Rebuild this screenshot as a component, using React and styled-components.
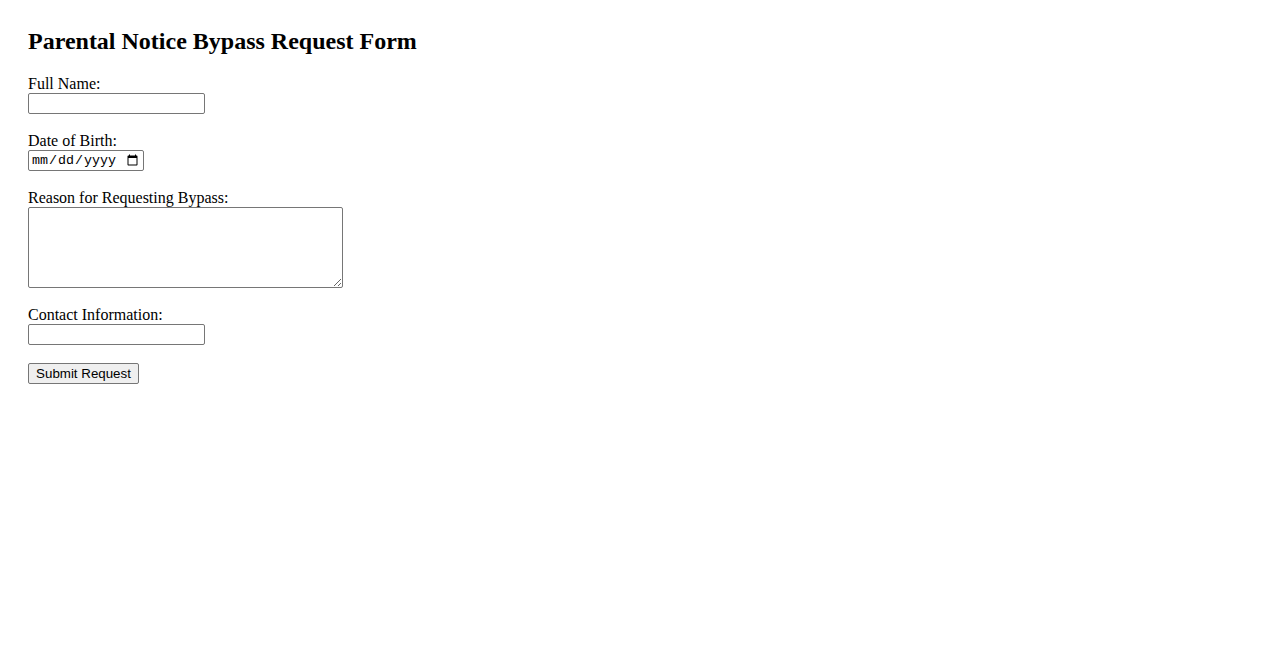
import React from "react";
import styled, { createGlobalStyle } from "styled-components";

const Global = createGlobalStyle`
  html, body { margin: 0; padding: 0; background: #fff; }
  body { font-family: "Liberation Serif", "Times New Roman", serif; font-size: 16px; color: #000; }
`;

const Page = styled.main`
  padding: 28px;
`;

const Title = styled.h2`
  margin: 0 0 19.5px;
  font-size: 24px;
  font-weight: bold;
  line-height: 27.5px;
`;

const Form = styled.form`
  display: flex;
  flex-direction: column;
  align-items: flex-start;
`;

const Field = styled.div`
  display: flex;
  flex-direction: column;
  align-items: flex-start;
  margin-bottom: 18px;
`;

const Label = styled.label`
  line-height: 18px;
`;

const controlBase = `
  box-sizing: border-box;
  border: 1px solid #767676;
  border-radius: 2px;
  background: #fff;
  margin: 0;
  color: #000;
`;

const TextInput = styled.input`
  ${controlBase}
  width: 177px;
  height: 21px;
  padding: 1px 2px;
  font: 13.33px "Liberation Sans", Arial, sans-serif;
`;

const DateInput = styled.input`
  ${controlBase}
  width: 116px;
  height: 21px;
  padding: 1px 2px;
  font: 13.33px "Liberation Mono", "DejaVu Sans Mono", monospace;
`;

const TextArea = styled.textarea`
  ${controlBase}
  width: 315px;
  height: 81px;
  padding: 2px;
  font: 13.33px "Liberation Mono", monospace;
  resize: both;
`;

const Button = styled.button`
  box-sizing: border-box;
  width: 111px;
  height: 21px;
  padding: 1px 6px;
  border: 1px solid #767676;
  border-radius: 2px;
  background: #efefef;
  color: #000;
  font: 13.33px "Liberation Sans", Arial, sans-serif;
  cursor: pointer;
`;

export default function App() {
  return (
    <Page>
      <Global />
      <Title>Parental Notice Bypass Request Form</Title>
      <Form onSubmit={(e) => e.preventDefault()}>
        <Field>
          <Label htmlFor="name">Full Name:</Label>
          <TextInput id="name" type="text" />
        </Field>
        <Field>
          <Label htmlFor="dob">Date of Birth:</Label>
          <DateInput id="dob" type="date" />
        </Field>
        <Field>
          <Label htmlFor="reason">Reason for Requesting Bypass:</Label>
          <TextArea id="reason" />
        </Field>
        <Field>
          <Label htmlFor="contact">Contact Information:</Label>
          <TextInput id="contact" type="text" />
        </Field>
        <Button type="submit">Submit Request</Button>
      </Form>
    </Page>
  );
}
